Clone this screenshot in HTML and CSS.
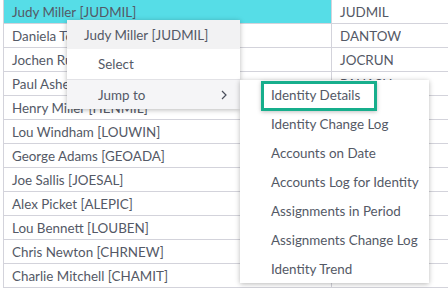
FILE: index.html
```html
<!DOCTYPE html>
<html lang="en">
<head>
    <meta charset="UTF-8">
    <title>Identities</title>
    <link rel="stylesheet" href="styles.css">
</head>
<body>
<div class="grid">
    <div class="row selected"><div class="cell name">Judy Miller [JUDMIL]</div><div class="cell code">JUDMIL</div></div>
    <div class="row"><div class="cell name">Daniela Towers [DANTOW]</div><div class="cell code">DANTOW</div></div>
    <div class="row"><div class="cell name">Jochen Runge [JOCRUN]</div><div class="cell code">JOCRUN</div></div>
    <div class="row"><div class="cell name">Paul Asher [PAUASH]</div><div class="cell code">PAUASH</div></div>
    <div class="row"><div class="cell name">Henry Miller [HENMIL]</div><div class="cell code">HENMIL</div></div>
    <div class="row"><div class="cell name">Lou Windham [LOUWIN]</div><div class="cell code">LOUWIN</div></div>
    <div class="row"><div class="cell name">George Adams [GEOADA]</div><div class="cell code">GEOADA</div></div>
    <div class="row"><div class="cell name">Joe Sallis [JOESAL]</div><div class="cell code">JOESAL</div></div>
    <div class="row"><div class="cell name">Alex Picket [ALEPIC]</div><div class="cell code">ALEPIC</div></div>
    <div class="row"><div class="cell name">Lou Bennett [LOUBEN]</div><div class="cell code">LOUBEN</div></div>
    <div class="row"><div class="cell name">Chris Newton [CHRNEW]</div><div class="cell code">CHRNEW</div></div>
    <div class="row"><div class="cell name">Charlie Mitchell [CHAMIT]</div><div class="cell code">CHAMIT</div></div>
</div>

<div class="menu context-menu">
    <div class="menu-head">Judy Miller [JUDMIL]</div>
    <div class="menu-item">Select</div>
    <div class="menu-item active">Jump to
        <svg class="chevron" width="6" height="10" viewBox="0 0 6 10"><path d="M1 1l4 4-4 4" fill="none" stroke="#4a4f5c" stroke-width="1.2"/></svg>
    </div>
</div>

<div class="menu sub-menu">
    <div class="sub-item focused"><span>Identity Details</span></div>
    <div class="sub-item"><span>Identity Change Log</span></div>
    <div class="sub-item"><span>Accounts on Date</span></div>
    <div class="sub-item"><span>Accounts Log for Identity</span></div>
    <div class="sub-item"><span>Assignments in Period</span></div>
    <div class="sub-item"><span>Assignments Change Log</span></div>
    <div class="sub-item"><span>Identity Trend</span></div>
</div>
</body>
</html>
```

FILE: styles.css
```css
:root {
    --text-color: #545966;
    --line-color: #d3d3db;
    --select-color: #56dde7;
    --focus-color: #17ae8c;
}
body {
    margin: 0;
    font-family: Lato, 'Open Sans', sans-serif;
    font-size: 13.4px;
    color: var(--text-color);
    background: #fff;
    position: relative;
    height: 288px;
    overflow: hidden;
}
.grid {
    margin-left: 3px;
    border-left: 1px solid var(--line-color);
}
.row {
    display: flex;
    height: 23px;
    border-bottom: 1px solid var(--line-color);
}
.cell {
    display: flex;
    align-items: center;
    white-space: nowrap;
    overflow: hidden;
}
.name {
    width: 319px;
    padding-left: 8px;
    border-right: 1px solid var(--line-color);
}
.code {
    padding-left: 8px;
}
.selected .name {
    background-color: var(--select-color);
}
.menu {
    position: absolute;
    background: #fff;
    box-shadow: 0 1px 5px rgba(0, 0, 0, 0.28);
}
.context-menu {
    left: 67px;
    top: 20px;
    width: 173px;
}
.menu-head {
    height: 29px;
    padding-left: 17px;
    display: flex;
    align-items: center;
    background: #f2f2f3;
}
.menu-item {
    height: 30px;
    padding-left: 31px;
    display: flex;
    align-items: center;
    position: relative;
}
.menu-item + .menu-item {
    border-top: 1px solid #e2e2e6;
    height: 29px;
}
.menu-item.active {
    background: #f5f5f7;
}
.chevron {
    position: absolute;
    right: 13px;
    top: 10px;
}
.sub-menu {
    left: 240px;
    top: 80px;
    width: 189px;
}
.sub-item {
    height: 29px;
    display: flex;
    align-items: center;
    padding-left: 31px;
}
.sub-item.focused {
    position: relative;
}
.sub-item.focused::before {
    content: "";
    position: absolute;
    left: 21px;
    top: 1px;
    width: 110px;
    height: 24px;
    border: 3px solid var(--focus-color);
    box-shadow: 0 1px 4px rgba(0, 0, 0, 0.25);
}
```
